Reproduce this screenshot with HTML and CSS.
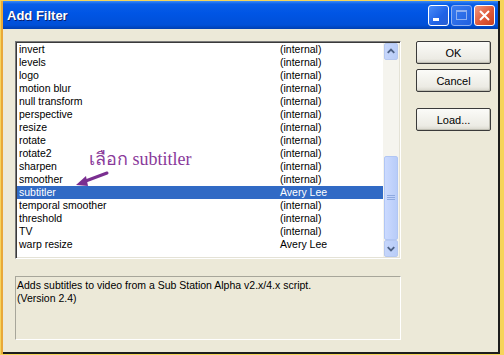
FILE: index.html
```html
<!DOCTYPE html>
<html lang="en">
<head>
    <meta charset="UTF-8">
    <title>Add Filter</title>
    <link rel="stylesheet" href="styles.css">
</head>
<body>
    <div class="window">
        <div class="titlebar">
            <span class="title">Add Filter</span>
            <div class="caption-buttons">
                <div class="cap-btn">
                    <svg width="21" height="21" viewBox="0 0 21 21"><rect x="5" y="13" width="6" height="3" fill="#fff"/></svg>
                </div>
                <div class="cap-btn disabled">
                    <svg width="21" height="21" viewBox="0 0 21 21"><rect x="5.5" y="5.5" width="10" height="9" fill="none" stroke="#8fb0f0"/><rect x="5" y="5" width="11" height="2" fill="#8fb0f0"/></svg>
                </div>
                <div class="cap-btn close">
                    <svg width="21" height="21" viewBox="0 0 21 21"><path d="M6 6 L15 15 M15 6 L6 15" stroke="#fff" stroke-width="2"/></svg>
                </div>
            </div>
        </div>
        <div class="client">
            <div class="main-col">
                <div class="listbox">
                    <div class="rows">
                        <div class="row"><span class="name">invert</span><span class="author">(internal)</span></div>
                        <div class="row"><span class="name">levels</span><span class="author">(internal)</span></div>
                        <div class="row"><span class="name">logo</span><span class="author">(internal)</span></div>
                        <div class="row"><span class="name">motion blur</span><span class="author">(internal)</span></div>
                        <div class="row"><span class="name">null transform</span><span class="author">(internal)</span></div>
                        <div class="row"><span class="name">perspective</span><span class="author">(internal)</span></div>
                        <div class="row"><span class="name">resize</span><span class="author">(internal)</span></div>
                        <div class="row"><span class="name">rotate</span><span class="author">(internal)</span></div>
                        <div class="row"><span class="name">rotate2</span><span class="author">(internal)</span></div>
                        <div class="row"><span class="name">sharpen</span><span class="author">(internal)</span></div>
                        <div class="row"><span class="name">smoother</span><span class="author">(internal)</span></div>
                        <div class="row selected"><span class="name">subtitler</span><span class="author">Avery Lee</span></div>
                        <div class="row"><span class="name">temporal smoother</span><span class="author">(internal)</span></div>
                        <div class="row"><span class="name">threshold</span><span class="author">(internal)</span></div>
                        <div class="row"><span class="name">TV</span><span class="author">(internal)</span></div>
                        <div class="row"><span class="name">warp resize</span><span class="author">Avery Lee</span></div>
                    </div>
                    <div class="scrollbar">
                        <div class="sb-btn">
                            <svg width="15" height="15" viewBox="0 0 15 15"><path d="M4 9 L7.5 5.5 L11 9" fill="none" stroke="#4d6185" stroke-width="2"/></svg>
                        </div>
                        <div class="sb-track">
                            <div class="sb-thumb">
                                <svg width="8" height="8" viewBox="0 0 8 8"><path d="M0 1.5h8M0 3.5h8M0 5.5h8" stroke="#8ea9e0"/></svg>
                            </div>
                        </div>
                        <div class="sb-btn">
                            <svg width="15" height="15" viewBox="0 0 15 15"><path d="M4 6 L7.5 9.5 L11 6" fill="none" stroke="#4d6185" stroke-width="2"/></svg>
                        </div>
                    </div>
                    <div class="note">เลือก subtitler</div>
                    <svg class="note-arrow" width="40" height="20" viewBox="0 0 40 20">
                        <path d="M34 3 L10 12" stroke="#7a2e90" stroke-width="3" stroke-linecap="round"/>
                        <path d="M3 15 L13 6 L15 16 Z" fill="#7a2e90"/>
                    </svg>
                </div>
                <div class="description">
                    Adds subtitles to video from a Sub Station Alpha v2.x/4.x script.<br>
                    (Version 2.4)
                </div>
            </div>
            <div class="side-col">
                <button class="btn">OK</button>
                <button class="btn">Cancel</button>
                <button class="btn load">Load...</button>
            </div>
        </div>
    </div>
</body>
</html>
```

FILE: styles.css
```css
body {
    margin: 0;
    padding: 1px 4px 3px 3px;
    background-color: #f6d45a;
    font-family: 'Liberation Sans', Arial, sans-serif;
    font-size: 10.5px;
    height: 355px;
    box-sizing: border-box;
    overflow: hidden;
}
.window {
    height: 100%;
    display: flex;
    flex-direction: column;
    background-color: #ece9d8;
    border-right: 2px solid #1c1c1c;
    border-bottom: 2px solid #1c1c1c;
    box-shadow: -2px 0 0 #e9a838;
}
.titlebar {
    height: 28px;
    flex-shrink: 0;
    display: flex;
    align-items: center;
    justify-content: space-between;
    padding: 0 3px 0 4px;
    background: linear-gradient(#3d8cf7 0px, #0a5fe8 3px, #0055e5 12px, #0050d8 24px, #003fb0 28px);
}
.title {
    color: #ffffff;
    font-weight: bold;
    font-size: 13px;
    text-shadow: 1px 1px 0 #0a1e6a;
}
.caption-buttons {
    display: flex;
    gap: 2px;
}
.cap-btn {
    width: 21px;
    height: 21px;
    box-sizing: border-box;
    border: 1px solid #ffffff;
    border-radius: 3px;
    background: linear-gradient(135deg, #4a8cf8, #1f62e6 60%, #2a5fd0);
    display: flex;
    align-items: center;
    justify-content: center;
}
.cap-btn svg {
    margin: -1px;
}
.cap-btn.disabled {
    border-color: #8fb0f0;
    background: linear-gradient(135deg, #3a7cf0, #2060e0);
}
.cap-btn.close {
    background: linear-gradient(135deg, #f09880, #e05a3a 55%, #c8401f);
}
.client {
    flex: 1;
    display: flex;
    padding: 12px 0 0 12px;
}
.main-col {
    width: 386px;
    display: flex;
    flex-direction: column;
    gap: 17px;
}
.listbox {
    position: relative;
    height: 218px;
    box-sizing: border-box;
    display: flex;
    background-color: #ffffff;
    border-top: 1px solid #7a7a7a;
    border-left: 1px solid #7a7a7a;
    border-right: 1px solid #ffffff;
    border-bottom: 1px solid #ffffff;
    box-shadow: inset 1px 1px 0 #3a3a3a, inset -1px -1px 0 #e4e2d6;
    padding: 1px;
}
.rows {
    flex: 1;
}
.row {
    height: 13px;
    line-height: 13px;
    display: flex;
    color: #000000;
}
.row .name {
    width: 261px;
    padding-left: 2px;
}
.row.selected {
    background-color: #316ac5;
    color: #ffffff;
}
.scrollbar {
    width: 16px;
    display: flex;
    flex-direction: column;
    background-color: #f5f4ee;
}
.sb-btn {
    height: 15px;
    margin: 0 1px;
    border: 1px solid #b6c8f0;
    border-radius: 2px;
    background: linear-gradient(90deg, #c6d6fb, #b9cdf8);
    display: flex;
    align-items: center;
    justify-content: center;
}
.sb-btn svg {
    margin: -1px;
}
.sb-track {
    flex: 1;
    display: flex;
    flex-direction: column;
    justify-content: flex-end;
}
.sb-thumb {
    height: 82px;
    margin: 0 1px;
    border: 1px solid #b1c6f4;
    border-radius: 2px;
    background: linear-gradient(90deg, #cbdaff, #b8ccf8);
    display: flex;
    align-items: center;
    justify-content: center;
}
.note {
    position: absolute;
    left: 73px;
    top: 102px;
    font-family: 'Liberation Serif', 'DejaVu Serif', serif;
    font-size: 18px;
    color: #8a3a9a;
}
.note-arrow {
    position: absolute;
    left: 57px;
    top: 128px;
}
.description {
    height: 64px;
    box-sizing: border-box;
    border-top: 1px solid #a7a69a;
    border-left: 1px solid #a7a69a;
    border-right: 1px solid #ffffff;
    border-bottom: 1px solid #ffffff;
    padding: 2px 1px;
    line-height: 13px;
    color: #000000;
}
.side-col {
    display: flex;
    flex-direction: column;
    margin-left: 15px;
    padding-top: 0;
}
.btn {
    width: 75px;
    height: 23px;
    margin-bottom: 5px;
    font-family: 'Liberation Sans', Arial, sans-serif;
    font-size: 11px;
    color: #000000;
    border: 1px solid #3a3a3a;
    border-radius: 2px;
    background: linear-gradient(#fbfbf8, #ecebe4 80%, #d8d6cc);
    box-shadow: inset -1px -1px 0 #c0bfb4;
}
.btn.load {
    margin-top: 11px;
}
```
